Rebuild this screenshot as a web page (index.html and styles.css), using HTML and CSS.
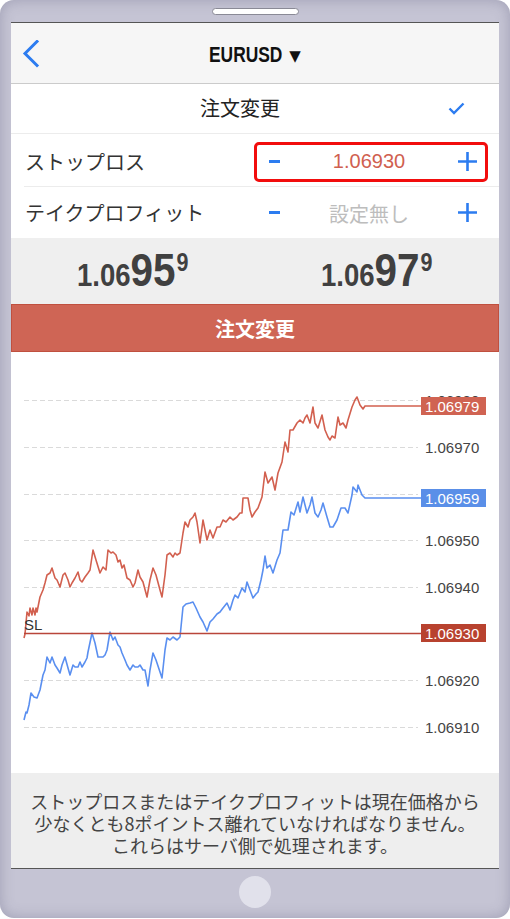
FILE: index.html
```
<!DOCTYPE html>
<html lang="ja">
<head>
<meta charset="utf-8">
<title>EURUSD 注文変更</title>
<link rel="stylesheet" href="styles.css">
</head>
<body>
<div class="phone">
  <div class="speaker"></div>
  <div class="screen">
    <header class="nav">
      <svg class="back" width="18" height="28" viewBox="0 0 18 28"><path d="M15 1.5 L3 13.5 L15 25.5" fill="none" stroke="#2c7cf0" stroke-width="3" stroke-linecap="square"/></svg>
      <h1 class="title"><span class="sym">EURUSD</span><span class="caret">▼</span></h1>
      <span></span>
    </header>
    <div class="row-head">
      <span class="head-label">注文変更</span>
      <svg class="check" width="17" height="13" viewBox="0 0 17 13"><path d="M1.5 6.5 L6 11 L15.5 1.5" fill="none" stroke="#2c7cf0" stroke-width="2.4"/></svg>
    </div>
    <div class="divider"></div>
    <div class="row-field first">
      <span class="label">ストップロス</span>
      <div class="stepper active">
        <span class="minus"></span>
        <span class="value set">1.06930</span>
        <svg class="plus" width="19" height="19" viewBox="0 0 19 19"><path d="M0 9.5 H19 M9.5 0 V19" stroke="#2c7cf0" stroke-width="2.6"/></svg>
      </div>
    </div>
    <div class="divider inset"></div>
    <div class="row-field">
      <span class="label">テイクプロフィット</span>
      <div class="stepper">
        <span class="minus"></span>
        <span class="value unset">設定無し</span>
        <svg class="plus" width="19" height="19" viewBox="0 0 19 19"><path d="M0 9.5 H19 M9.5 0 V19" stroke="#2c7cf0" stroke-width="2.6"/></svg>
      </div>
    </div>
    <div class="prices">
      <div class="price"><span class="num">1.06<b>95</b><sup>9</sup></span></div>
      <div class="price"><span class="num">1.06<b>97</b><sup>9</sup></span></div>
    </div>
    <button class="submit">注文変更</button>
    <div class="chart">
      <svg width="488" height="421" viewBox="11 352 488 421">
        <g stroke="#dadada" stroke-width="1" stroke-dasharray="5 3">
          <line x1="24" y1="400.5" x2="418" y2="400.5"/>
          <line x1="24" y1="447.5" x2="418" y2="447.5"/>
          <line x1="24" y1="494.5" x2="418" y2="494.5"/>
          <line x1="24" y1="540.5" x2="418" y2="540.5"/>
          <line x1="24" y1="587.5" x2="418" y2="587.5"/>
          <line x1="24" y1="680.5" x2="418" y2="680.5"/>
          <line x1="24" y1="727.5" x2="418" y2="727.5"/>
        </g>
        <g class="axis" font-size="15" fill="#444">
          <text x="425" y="405.5">1.06980</text>
          <text x="425" y="453">1.06970</text>
          <text x="425" y="546">1.06950</text>
          <text x="425" y="593">1.06940</text>
          <text x="425" y="686">1.06920</text>
          <text x="425" y="733">1.06910</text>
        </g>
        <polyline fill="none" stroke="#d2604f" stroke-width="1.6" stroke-linejoin="round" points="24,638 25,634 27,612 29,616 30,608 32,615 33,608 35,615 36,608 37,612 40,597 43,590 45,583 47,575 50,573 52,568 55,578 57,580 60,587 63,575 65,573 68,580 70,587 72,583 75,578 78,572 80,580 82,582 85,577 88,573 90,570 93,550 96,560 100,573 103,567 106,570 108,550 111,553 113,552 116,555 118,562 120,560 122,568 124,565 127,578 130,580 133,587 135,583 138,570 140,577 143,582 147,597 150,580 153,568 156,575 160,590 162,597 165,575 167,555 170,553 173,557 175,553 177,555 180,553 183,533 185,522 188,527 190,520 193,517 195,513 197,522 200,543 203,520 207,540 210,530 213,538 217,527 220,527 223,520 226,522 230,517 233,520 237,517 240,513 242,513 243,498 248,498 250,510 252,517 255,512 258,508 262,497 265,472 268,483 270,480 272,477 275,490 278,473 282,462 285,442 288,452 290,430 293,430 297,423 300,420 303,423 305,418 307,415 310,423 313,407 315,423 318,428 322,415 325,430 328,437 330,440 332,436 335,438 338,417 340,425 343,423 346,428 348,420 352,407 355,400 357,397 360,405 363,409 365,406 421,406"/>
        <polyline fill="none" stroke="#5a8ff0" stroke-width="1.6" stroke-linejoin="round" points="24,720 26,712 27,713 29,705 31,693 34,697 37,698 40,690 43,675 45,670 47,657 50,663 52,657 55,665 57,668 60,673 62,665 65,657 68,668 70,675 73,665 75,667 78,667 80,662 82,667 85,662 87,658 88,652 92,633 95,643 98,657 101,657 103,657 105,655 107,650 110,632 113,640 115,637 118,645 120,647 122,653 125,660 127,665 130,670 133,665 135,667 138,667 140,665 143,670 145,670 148,686 150,670 153,653 156,660 160,672 162,678 165,650 167,638 170,640 173,637 177,640 180,637 183,607 186,604 190,603 193,602 196,608 200,617 203,622 207,631 210,622 213,619 217,614 220,612 223,608 227,603 230,610 233,600 235,595 238,598 242,588 245,592 247,582 250,590 253,598 256,594 258,592 261,580 263,570 265,556 267,568 270,565 273,573 277,560 280,553 283,530 288,530 291,512 294,515 298,502 300,512 303,497 307,513 310,505 312,497 315,513 318,517 321,510 323,503 327,517 330,527 333,527 337,520 341,508 345,508 348,513 352,495 353,487 357,492 358,485 362,495 365,498 421,498"/>
        <line x1="24" y1="633.5" x2="421" y2="633.5" stroke="#b9463a" stroke-width="1.5"/>
        <text x="24" y="630" font-size="15" fill="#333" class="axis">SL</text>
        <rect x="421" y="397" width="65" height="18" fill="#d06352"/>
        <text x="425" y="411.5" font-size="15" fill="#fff" class="axis">1.06979</text>
        <rect x="421" y="489" width="65" height="18" fill="#5a8fe8"/>
        <text x="425" y="503.5" font-size="15" fill="#fff" class="axis">1.06959</text>
        <rect x="421" y="624" width="65" height="18" fill="#b8422f"/>
        <text x="425" y="638.5" font-size="15" fill="#fff" class="axis">1.06930</text>
      </svg>
    </div>
    <footer class="note"><p>ストップロスまたはテイクプロフィットは現在価格から</p><p>少なくとも8ポイントス離れていなければなりません。</p><p>これらはサーバ側で処理されます。</p></footer>
  </div>
  <div class="home"></div>
</div>
</body>
</html>
```
FILE: styles.css
```
* { box-sizing: border-box; }
html, body { margin: 0; padding: 0; background: #ffffff; }
body { font-family: "Liberation Sans", Arial, sans-serif; }

.phone {
  width: 510px;
  height: 918px;
  border-radius: 14px;
  background: #c5c4d4;
  box-shadow: inset 0 0 14px rgba(90, 88, 120, 0.35);
  padding: 8px 11px 0;
}
.speaker {
  width: 87px;
  height: 7px;
  margin: 0 auto 7px;
  background: #ffffff;
  border: 1px solid #8a8a96;
  border-radius: 4px;
}
.screen {
  height: 847px;
  background: #ffffff;
  border-top: 1px solid #555;
  border-bottom: 1px solid #555;
  display: flex;
  flex-direction: column;
}
.nav {
  height: 61px;
  flex: none;
  background: #f6f6f6;
  border-bottom: 1px solid #cbcbcb;
  display: grid;
  grid-template-columns: 1fr auto 1fr;
  align-items: center;
}
.back { display: block; margin: 1px 0 0 11px; }
.title {
  margin: 0;
  font-family: "Liberation Sans", sans-serif;
  font-weight: bold;
  font-size: 22px;
  color: #111;
  padding-top: 3px;
  white-space: nowrap;
}
.sym {
  display: inline-block;
  transform: scaleX(0.79);
  transform-origin: left center;
  margin-right: -20px;
}
.caret {
  font-family: "DejaVu Sans", sans-serif;
  font-size: 15px;
  margin-left: 7px;
  vertical-align: 1px;
}
.row-head {
  height: 49px;
  flex: none;
  display: flex;
  align-items: center;
  padding-right: 34px;
}
.head-label {
  flex: 1;
  text-align: center;
  padding-left: 21px;
  font-family: "Noto Sans CJK JP", sans-serif;
  font-size: 20px;
  color: #222;
  padding-bottom: 3px;
}
.check { display: block; }
.divider { height: 1px; background: #ececec; flex: none; }
.divider.inset { margin-left: 13px; }
.row-field {
  height: 51px;
  flex: none;
  display: flex;
  align-items: center;
  justify-content: space-between;
  padding: 0 11px 0 14px;
}
.row-field.first { height: 52px; padding-top: 3px; }
.label {
  font-family: "Noto Sans CJK JP", sans-serif;
  font-size: 20px;
  color: #333;
}
.stepper {
  width: 234px;
  height: 40px;
  border: 3px solid transparent;
  border-radius: 5px;
  display: flex;
  align-items: center;
  padding: 0 8px 0 12px;
}
.stepper.active { border-color: #f20d0d; }
.minus {
  width: 11px;
  height: 3px;
  background: #2c7cf0;
  flex: none;
}
.plus { display: block; flex: none; }
.value {
  flex: 1;
  text-align: center;
  font-size: 20px;
}
.value.set { color: #d0604f; font-family: "Liberation Sans", sans-serif; }
.value.unset { color: #bdbdbd; font-family: "Noto Sans CJK JP", sans-serif; padding-top: 1px; }

.prices {
  height: 66px;
  flex: none;
  background: #efefef;
  display: flex;
}
.price {
  flex: 1;
  text-align: center;
  line-height: 64px;
  font-family: "Liberation Sans", sans-serif;
  font-weight: bold;
  font-size: 32px;
  color: #404040;
  white-space: nowrap;
}
.num {
  display: inline-block;
  transform: scaleX(0.86);
}
.price b { font-size: 47px; }
.price sup { font-size: 25px; vertical-align: 15px; line-height: 0; margin-left: 1px; }

.submit {
  height: 48px;
  flex: none;
  margin: 0;
  width: 100%;
  background: #cf6555;
  border: 1px solid #c0503f;
  color: #ffffff;
  font-family: "Noto Sans CJK JP", sans-serif;
  font-weight: bold;
  font-size: 20px;
  padding: 0;
}
.chart { height: 421px; flex: none; background: #ffffff; }
.chart svg { display: block; }
.axis { font-family: "Liberation Sans", Arial, sans-serif; }

.note {
  height: 95px;
  flex: none;
  background: #eeeeee;
  padding-top: 17px;
  text-align: center;
  white-space: nowrap;
  font-family: "Noto Sans CJK JP", sans-serif;
  font-size: 18px;
  color: #444;
}
.note p {
  margin: 0;
  height: 22px;
  line-height: 22px;
}
.home {
  width: 32px;
  height: 32px;
  border-radius: 50%;
  background: #e1e1eb;
  margin: 7px auto 0;
}
```
